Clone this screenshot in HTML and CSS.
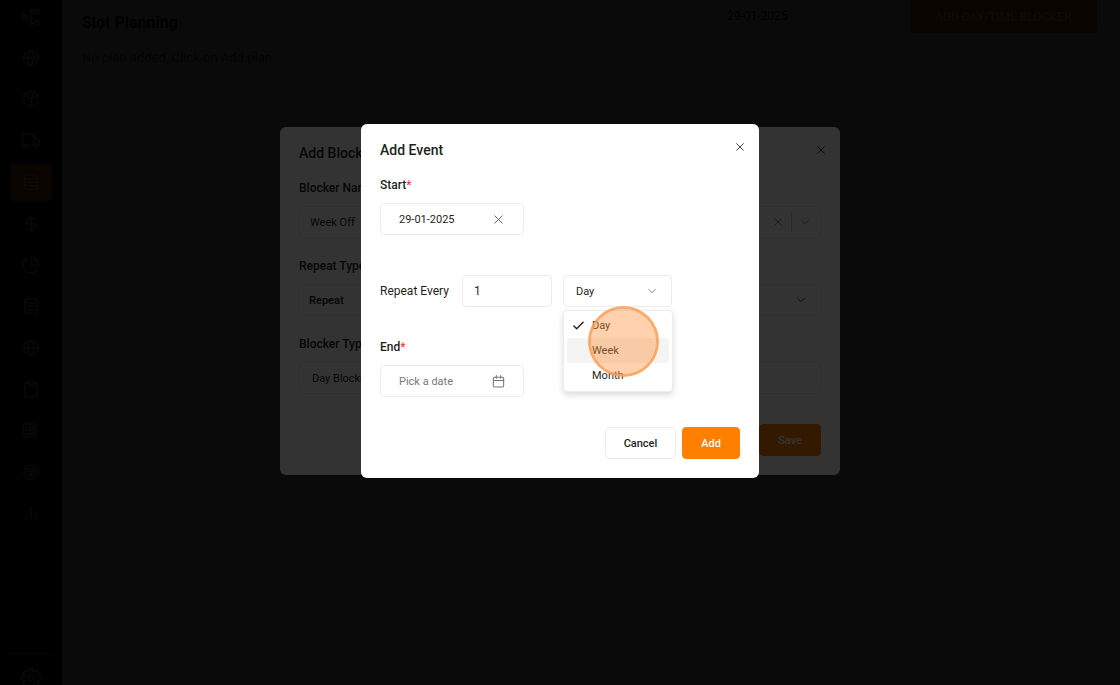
FILE: index.html
```html
<!DOCTYPE html>
<html lang="en">
<head>
<meta charset="utf-8">
<meta name="viewport" content="width=device-width, initial-scale=1">
<title>Slot Planning</title>
<link rel="stylesheet" href="styles.css">
</head>
<body>
<svg class="sprite" aria-hidden="true">
  <symbol id="globe" viewBox="0 0 24 24"><circle cx="12" cy="12" r="10"/><path d="M2 12h20M12 2c-5.500 5.500-5.500 14.500 0 20M12 2c5.500 5.500 5.500 14.500 0 20"/></symbol>
  <symbol id="database" viewBox="0 0 24 24"><ellipse cx="12" cy="5" rx="8.500" ry="3"/><path d="M3.500 5v14c0 1.700 3.800 3 8.500 3s8.500-1.300 8.500-3V5M3.500 9.700c0 1.700 3.800 3 8.500 3s8.500-1.300 8.500-3M3.500 14.400c0 1.700 3.800 3 8.500 3s8.500-1.300 8.500-3"/></symbol>
  <symbol id="close" viewBox="0 0 24 24"><path d="M4 4l16 16M20 4L4 20"/></symbol>
  <symbol id="chevron" viewBox="0 0 24 24"><path d="M4 8l8 8 8-8"/></symbol>
</svg>

<div class="app">
  <aside class="sidebar">
    <nav class="nav" aria-label="Main">
      <a class="nav-link" href="#" aria-label="Network"><svg class="nav-icon" viewBox="0 0 24 24"><rect x="1" y="9.500" width="5" height="5"/><rect x="17" y="1.500" width="5.500" height="5.500"/><rect x="17" y="17" width="5.500" height="5.500"/><circle cx="12" cy="4" r="1.500"/><circle cx="12" cy="12" r="1.500"/><circle cx="12" cy="20" r="1.500"/><path d="M6 12h4M12 6v4M12 14v4M14 4h3M14 20h3"/></svg></a>
      <a class="nav-link" href="#" aria-label="Regions"><svg class="nav-icon"><use href="#globe"/></svg></a>
      <a class="nav-link" href="#" aria-label="Packages"><svg class="nav-icon" viewBox="0 0 24 24"><path d="M12 1.500l9.500 5v11L12 22.500l-9.500-5v-11zM2.500 6.500L12 12l9.500-5.500M12 12v10.500M7 4l9.500 5.500"/></svg></a>
      <a class="nav-link" href="#" aria-label="Vehicles"><svg class="nav-icon" viewBox="0 0 24 24"><path d="M4 18H1V3h15v15H8M16 8h4l3 4v6h-2M16 18h1"/><circle cx="6" cy="19" r="2.200"/><circle cx="19" cy="19" r="2.200"/></svg></a>
      <a class="nav-link nav-active" href="#" aria-label="Slot planning" aria-current="page"><svg class="nav-icon"><use href="#database"/></svg></a>
      <a class="nav-link" href="#" aria-label="Billing"><svg class="nav-icon" viewBox="0 0 24 24"><path d="M12 1v22M17 5H9.500a3.500 3.500 0 0 0 0 7h5a3.500 3.500 0 0 1 0 7H6"/></svg></a>
      <a class="nav-link" href="#" aria-label="Reports"><svg class="nav-icon" viewBox="0 0 24 24"><path d="M12 1.500V12h10.500A10.500 10.500 0 0 0 12 1.500zM8 3A10 10 0 1 0 21 16"/></svg></a>
      <a class="nav-link" href="#" aria-label="Data"><svg class="nav-icon"><use href="#database"/></svg></a>
      <a class="nav-link" href="#" aria-label="Zones"><svg class="nav-icon"><use href="#globe"/></svg></a>
      <a class="nav-link" href="#" aria-label="Tasks"><svg class="nav-icon" viewBox="0 0 24 24"><path d="M8 4H4v18h16V4h-4"/><rect x="8" y="2" width="8" height="4" rx="1"/></svg></a>
      <a class="nav-link" href="#" aria-label="Calculator"><svg class="nav-icon" viewBox="0 0 24 24"><rect x="1.500" y="2" width="18" height="18" rx="3"/><path d="M10.500 2v18M1.500 11h18M4 6.500h4M6 4.500v4M13 5l4 4M17 5l-4 4M4 15.500h4M13 14h4M13 17h4"/></svg></a>
      <a class="nav-link" href="#" aria-label="Tracking"><svg class="nav-icon" viewBox="0 0 24 24"><circle cx="12" cy="12" r="9"/><path d="M12 0v3M12 21v3M0 12h3M21 12h3M12 7l5 2.500v5L12 17l-5-2.500v-5zM7 9.500l5 2.500 5-2.500M12 12v5"/></svg></a>
      <a class="nav-link" href="#" aria-label="Analytics"><svg class="nav-icon" viewBox="0 0 24 24"><path d="M6 20v-6M12 20V3M18 20v-9"/></svg></a>
    </nav>
    <div class="sidebar-foot">
      <a class="settings" href="#" aria-label="Settings"><svg class="settings-icon" viewBox="0 0 24 24"><circle cx="12" cy="12" r="3.300"/><path d="M10 1h4l.6 3 1.900.8L19 3l2.500 2.700-1.700 2.500.8 1.900 3 .4v3.400l-3 .6-.8 1.900 1.700 2.600L19 21.500l-2.500-1.700-1.900.8-.6 2.900h-4l-.6-2.900-1.900-.8L5 21.500 2.500 19l1.700-2.600-.8-1.900-3-.6v-3.400l3-.4.8-1.900-1.700-2.500L5 3l2.500 1.800 1.900-.8z"/></svg></a>
    </div>
  </aside>
  <main class="page">
    <div class="page-head">
      <h1 class="page-title">Slot Planning</h1>
      <input class="page-date" type="text" value="29-01-2025" aria-label="Plan date">
      <button class="page-action" type="button">ADD DAY/TIME BLOCKER</button>
    </div>
    <p class="page-empty">No plan added, Click on Add plan.</p>
  </main>
</div>

<div class="overlay">
  <section class="dialog dialog-wide" role="dialog" aria-labelledby="blocker-title">
    <header class="dialog-head">
      <h2 class="dialog-title" id="blocker-title">Add Blocker</h2>
      <button class="icon-button" type="button" aria-label="Close"><svg class="icon-close"><use href="#close"/></svg></button>
    </header>
    <div class="group">
      <label class="label" for="blocker-name">Blocker Name</label>
      <div class="combo">
        <input class="combo-input" id="blocker-name" type="text" value="Week Off">
        <button class="icon-button faint" type="button" aria-label="Clear"><svg class="icon-close"><use href="#close"/></svg></button>
        <span class="combo-rule"></span>
        <button class="icon-button faint" type="button" aria-label="Open"><svg class="icon-small"><use href="#chevron"/></svg></button>
      </div>
    </div>
    <div class="group">
      <label class="label" for="repeat-type">Repeat Type</label>
      <div class="select-box">
        <select class="select select-strong" id="repeat-type"><option>Repeat</option></select>
        <svg class="icon-small select-arrow"><use href="#chevron"/></svg>
      </div>
    </div>
    <div class="group">
      <label class="label" for="blocker-type">Blocker Type</label>
      <div class="select-box">
        <select class="select" id="blocker-type"><option>Day Blocker</option></select>
      </div>
    </div>
    <footer class="dialog-foot">
      <button class="button button-primary" type="button">Save</button>
    </footer>
  </section>
</div>

<div class="overlay">
  <section class="dialog dialog-narrow" role="dialog" aria-modal="true" aria-labelledby="event-title">
    <header class="dialog-head">
      <h2 class="dialog-title" id="event-title">Add Event</h2>
      <button class="icon-button" type="button" aria-label="Close"><svg class="icon-close"><use href="#close"/></svg></button>
    </header>
    <div class="group">
      <label class="label" for="start-date">Start<span class="required">*</span></label>
      <button class="date-button" id="start-date" type="button"><span>29-01-2025</span><svg class="icon-date icon-clear"><use href="#close"/></svg></button>
    </div>
    <div class="repeat-row">
      <label class="repeat-label" for="repeat-count">Repeat Every</label>
      <input class="count" id="repeat-count" type="text" inputmode="numeric" value="1">
      <div class="unit">
        <select class="select" aria-label="Repeat unit"><option>Day</option></select>
        <svg class="icon-small select-arrow unit-arrow"><use href="#chevron"/></svg>
        <ul class="menu" role="listbox" aria-label="Units">
          <li class="menu-item" role="option" aria-selected="true"><svg class="menu-check" viewBox="0 0 12 12"><path d="M1 6.500l3 3 7-7"/></svg>Day</li>
          <li class="menu-item menu-hover" role="option" aria-selected="false">Week</li>
          <li class="menu-item" role="option" aria-selected="false">Month</li>
        </ul>
        <span class="click-ring"></span>
      </div>
    </div>
    <div class="group">
      <label class="label" for="end-date">End<span class="required">*</span></label>
      <button class="date-button date-empty" id="end-date" type="button"><span>Pick a date</span><svg class="icon-date" viewBox="0 0 24 24"><rect x="2.500" y="4" width="19" height="18" rx="2"/><path d="M2.500 10h19M8 1v5M16 1v5"/></svg></button>
    </div>
    <footer class="dialog-foot">
      <button class="button" type="button">Cancel</button>
      <button class="button button-primary" type="button">Add</button>
    </footer>
  </section>
</div>
</body>
</html>
```
FILE: styles.css
```css
* {
  box-sizing: border-box;
}

body {
  margin: 0;
  font-family: Roboto, "Liberation Sans", sans-serif;
  font-size: 12px;
  color: #1f1f22;
  background: #fff;
  overflow: hidden;
}

button,
input,
select {
  font: inherit;
  color: inherit;
}

svg {
  display: block;
  fill: none;
  stroke: currentColor;
  stroke-width: 2;
  stroke-linecap: round;
  stroke-linejoin: round;
}

.sprite {
  display: none;
}

/* Application page */
.app {
  display: flex;
  height: 100vh;
}

.sidebar {
  display: flex;
  flex-direction: column;
  width: 62px;
  padding: 0 8px;
  background: #0c0c0c;
  color: #ccc;
}

.nav {
  display: grid;
  grid-auto-rows: 1fr;
  flex: 1;
  margin-top: -4px;
  padding-bottom: 119px;
}

.nav-link {
  display: flex;
  align-items: center;
  justify-content: center;
  margin: 2px;
  color: inherit;
}

.nav-active {
  border-radius: 3px;
  background: #f07000;
  color: #fff;
}

.nav-icon {
  width: 18px;
  height: 18px;
}

.sidebar-foot {
  height: 32px;
  padding-top: 14px;
  border-top: 1px solid #888;
}

.settings {
  display: flex;
  justify-content: center;
  color: inherit;
}

.settings-icon {
  flex: none;
  width: 20px;
  height: 20px;
}

.page {
  flex: 1;
  padding: 0 23px 0 20px;
}

.page-head {
  display: flex;
  align-items: flex-start;
}

.page-title {
  flex: 1;
  margin: 12px 0 0;
  font-size: 16px;
  line-height: 22px;
  font-weight: 700;
  color: #000;
}

.page-date {
  width: 178px;
  height: 32px;
  margin-right: 14px;
  padding: 0 8px;
  border: solid #ddd;
  border-width: 0 0 1px 1px;
  color: #000;
  background: none;
}

.page-action {
  width: 187px;
  height: 33px;
  border: 0;
  border-radius: 0 0 4px 4px;
  background: #f07000;
  color: #fff;
  font-weight: 500;
}

.page-empty {
  margin: 16px 0 0;
  font-size: 13px;
  line-height: 16px;
  color: #555;
}

/* Dialogs */
.overlay {
  position: fixed;
  inset: 0;
  display: grid;
  place-items: center;
  padding-bottom: 83px;
  background: rgba(0, 0, 0, 0.8);
}

.dialog {
  padding: 16px 19px 19px;
  border-radius: 6px;
  background: #fff;
}

.dialog-wide {
  width: 560px;
}

.dialog-narrow {
  width: 398px;
}

.dialog-head {
  display: flex;
  justify-content: space-between;
  align-items: flex-start;
  height: 20px;
  margin-bottom: 17px;
}

.dialog-title {
  margin: 0;
  font-size: 14px;
  line-height: 20px;
  font-weight: 500;
}

.icon-button {
  display: flex;
  align-items: center;
  justify-content: center;
  width: 14px;
  height: 14px;
  padding: 0;
  border: 0;
  background: none;
}

.dialog-head .icon-button {
  margin-right: -7px;
}

.icon-close {
  width: 10px;
  height: 10px;
}

.icon-small {
  width: 10px;
  height: 10px;
}

.faint {
  color: #777;
}

.label {
  display: block;
  width: max-content;
  margin-bottom: 10px;
  font-size: 12px;
  line-height: 16px;
  font-weight: 500;
}

.required {
  color: #ef4444;
}

.dialog-wide .group + .group {
  margin-top: 20px;
}

.combo,
.select,
.count,
.date-button,
.button {
  height: 32px;
  border: 1px solid #ececec;
  border-radius: 4px;
  background: #fff;
}

.combo {
  display: flex;
  align-items: center;
  padding: 0 8px 0 10px;
}

.combo-input {
  flex: 1;
  padding: 0;
  border: 0;
  background: none;
  font-size: 11px;
}

.combo-rule {
  width: 1px;
  height: 19px;
  margin: 0 6px;
  background: #ccc;
}

.select-box,
.unit {
  position: relative;
}

.select {
  display: block;
  width: 100%;
  padding: 0 12px;
  appearance: none;
  font-size: 11px;
}

.select-strong {
  padding: 0 9px;
  font-weight: 600;
}

.select-arrow {
  position: absolute;
  top: 11px;
  right: 15px;
  pointer-events: none;
}

.dialog-foot {
  display: flex;
  justify-content: flex-end;
  gap: 6px;
  margin-top: 30px;
}

.button {
  padding: 0 18px;
  font-size: 11px;
  font-weight: 500;
}

.button-primary {
  border-color: #ff7f00;
  background: #ff7f00;
  color: #fff;
}

.date-button {
  display: flex;
  align-items: center;
  justify-content: space-between;
  width: 144px;
  padding: 0 18px;
  font-size: 11px;
}

.date-empty {
  color: #777;
}

.icon-date {
  width: 13px;
  height: 13px;
}

.icon-clear {
  width: 11px;
  height: 11px;
  margin-right: 1px;
  color: #555;
}

.repeat-row {
  display: flex;
  align-items: center;
  gap: 11px;
  margin: 40px 0 32px;
}

.repeat-label {
  min-width: 71px;
  font-size: 12px;
}

.count {
  width: 90px;
  padding: 0 11px;
}

.unit {
  width: 109px;
}

.unit-arrow {
  color: #777;
}

.menu {
  position: absolute;
  top: 35px;
  left: 0;
  width: 110px;
  margin: 0;
  padding: 2px 3px 3px;
  border: 1px solid #ececec;
  border-radius: 4px;
  background: #fff;
  box-shadow: 0 3px 6px rgba(0, 0, 0, 0.14);
  list-style: none;
}

.menu-item {
  position: relative;
  padding-left: 25px;
  border-radius: 2px;
  font-size: 11px;
  line-height: 25px;
}

.menu-hover {
  background: #f4f4f3;
}

.menu-check {
  position: absolute;
  top: 7px;
  left: 6px;
  width: 11px;
  height: 11px;
  stroke-width: 1.5;
}

.click-ring {
  position: absolute;
  top: 31px;
  left: 25px;
  width: 71px;
  height: 71px;
  border: 3px solid rgba(250, 155, 80, 0.85);
  border-radius: 50%;
  background: rgba(255, 140, 50, 0.4);
  background-clip: padding-box;
}
```
